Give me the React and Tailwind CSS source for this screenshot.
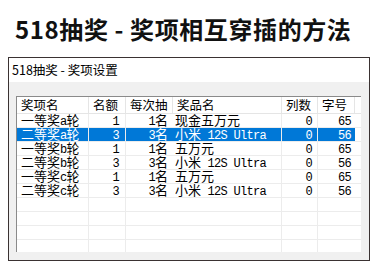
import React from 'react';

const cols = [
  { key: 'name', label: '奖项名', w: 'w-[72px]', align: 'left', line: true },
  { key: 'count', label: '名额', w: 'w-[37px]', align: 'right', pr: 'pr-[6px]', line: true },
  { key: 'each', label: '每次抽', w: 'w-[47px]', align: 'right', pr: 'pr-[5px]', line: false },
  { key: 'prize', label: '奖品名', w: 'w-[109px]', align: 'left', line: true },
  { key: 'col', label: '列数', w: 'w-[36px]', align: 'right', pr: 'pr-[5px]', line: true },
  { key: 'size', label: '字号', w: 'w-[37px]', align: 'right', pr: 'pr-[4px]', line: false },
];

const rows = [
  { name: '一等奖a轮', count: '1', each: '1名', prize: '现金五万元', col: '0', size: '65' },
  { name: '二等奖a轮', count: '3', each: '3名', prize: '小米 12S Ultra', col: '0', size: '56', selected: true },
  { name: '一等奖b轮', count: '1', each: '1名', prize: '五万元', col: '0', size: '65' },
  { name: '二等奖b轮', count: '3', each: '3名', prize: '小米 12S Ultra', col: '0', size: '56' },
  { name: '一等奖c轮', count: '1', each: '1名', prize: '五万元', col: '0', size: '65' },
  { name: '二等奖c轮', count: '3', each: '3名', prize: '小米 12S Ultra', col: '0', size: '56' },
];

// ascii runs get a narrow mono face, like the bitmap song font in the shot
const Mixed = ({ s }) => {
  const parts = s.match(/[\x20-\x7e]+|[^\x20-\x7e]+/g) || [];
  return parts.map((p, i) =>
    /^[\x20-\x7e]+$/.test(p) ? (
      <span key={i} className="font-['Liberation_Mono',monospace] text-[12px] tracking-[-0.7px] whitespace-pre">{p}</span>
    ) : (
      <span key={i}>{p}</span>
    )
  );
};

const Row = ({ r }) => (
  <div className="flex h-[14px] border-b border-[#ececec] shrink-0">
    {cols.map((c) => (
      <div
        key={c.key}
        className={`${c.w} h-[13px] shrink-0 whitespace-nowrap leading-[12px] ${c.line ? 'border-r border-[#ececec]' : ''} ${
          c.align === 'right' ? `text-right ${c.pr}` : c.key === 'name' ? 'pl-[4px]' : 'pl-[2px]'
        } ${r && r.selected ? 'bg-[#0078d7] text-white' : 'text-black'}`}
      >
        {r ? <Mixed s={r[c.key]} /> : null}
      </div>
    ))}
  </div>
);

export default function App() {
  return (
    <div className="w-[378px] h-[268px] bg-white overflow-hidden font-['Noto_Sans_CJK_SC',sans-serif]">
      <h1 className="pt-[13px] pl-[15px] text-[24px] leading-[32px] font-bold tracking-[0.6px] text-[#111] whitespace-nowrap">
        518抽奖 - 奖项相互穿插的方法
      </h1>
      <div className="mt-[12px] ml-[8px] w-[362px] h-[204px] border border-[#3a3232] bg-[#f0f0f0] flex flex-col">
        <div className="h-[24px] bg-white flex items-center pl-[3px] text-[12.5px] leading-[16px] text-black shrink-0">
          518抽奖 - 奖项设置
        </div>
        <div className="pt-[14px] pl-[7px]">
          <div className="w-[345px] h-[156px] bg-white border-l border-t border-[#8a8a8a] overflow-hidden flex flex-col">
            <div className="flex h-[17px] border-b border-[#e5e5e5] shrink-0 text-[12.5px] leading-[16px] text-black">
              {cols.map((c) => (
                <div key={c.key} className={`${c.w} shrink-0 flex items-center pl-[4px] border-r border-[#e5e5e5] whitespace-nowrap`}>
                  {c.label}
                </div>
              ))}
            </div>
            <div className="text-[13px] flex flex-col">
              {rows.map((r, i) => (
                <Row key={i} r={r} />
              ))}
              {[0, 1, 2, 3].map((i) => (
                <Row key={'e' + i} />
              ))}
            </div>
          </div>
        </div>
      </div>
    </div>
  );
}
